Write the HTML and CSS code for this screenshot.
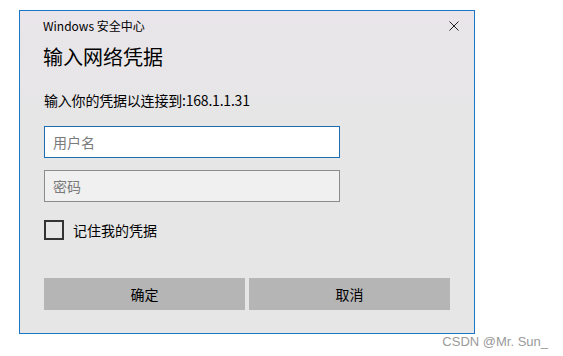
FILE: index.html
```html
<!DOCTYPE html>
<html lang="zh-CN">
<head>
<meta charset="utf-8">
<title>Windows 安全中心</title>
<link rel="stylesheet" href="styles.css">
</head>
<body>
<div class="dialog">
  <div class="header">
    <span class="app-title">Windows 安全中心</span>
    <svg class="close" width="10" height="10" viewBox="0 0 10 10" aria-hidden="true">
      <path d="M0.5 0.5 L9.5 9.5 M9.5 0.5 L0.5 9.5" stroke="#222" stroke-width="1" fill="none"/>
    </svg>
  </div>
  <h1 class="heading">输入网络凭据</h1>
  <p class="desc">输入你的凭据以连接到:168.1.1.31</p>
  <input class="field field-user" type="text" placeholder="用户名">
  <input class="field field-pass" type="password" placeholder="密码">
  <label class="remember"><span class="box"></span><span class="remember-text">记住我的凭据</span></label>
  <div class="buttons">
    <div class="btn">确定</div>
    <div class="btn">取消</div>
  </div>
</div>
<div class="watermark">CSDN @Mr. Sun_</div>
</body>
</html>
```

FILE: styles.css
```css
html, body {
  margin: 0;
  padding: 0;
  background: #ffffff;
}
body {
  width: 563px;
  height: 356px;
  overflow: hidden;
  font-family: "Noto Sans CJK SC", "Noto Sans", sans-serif;
  color: #000;
}
.dialog {
  box-sizing: border-box;
  margin: 10px 0 0 19px;
  width: 456px;
  height: 324px;
  border: 1px solid #1a76c9;
  background: linear-gradient(#e9e5ea, #e6e6e6 120px);
  padding: 0 24px 0 24px;
  display: flex;
  flex-direction: column;
}
.header {
  display: flex;
  justify-content: space-between;
  align-items: center;
  margin-top: 7px;
  margin-right: -9px;
  height: 16px;
}
.app-title {
  font-size: 12px;
  line-height: 16px;
  margin-left: -1px;
}
.close {
  display: block;
}
.heading {
  margin: 9px 0 0 -1px;
  font-size: 20px;
  line-height: 28px;
  font-weight: normal;
}
.desc {
  margin: 19px 0 0 0;
  font-size: 14px;
  line-height: 20px;
  letter-spacing: -0.2px;
}
.field {
  box-sizing: border-box;
  display: block;
  width: 296px;
  height: 32px;
  margin: 0;
  padding: 0 8px;
  font-family: "Noto Sans CJK SC", "Noto Sans", sans-serif;
  font-size: 14px;
  outline: none;
}
.field::placeholder {
  color: #7a7a7a;
}
.field-user {
  margin-top: 16px;
  background: #ffffff;
  border: 1px solid #1f6bb0;
}
.field-pass {
  margin-top: 12px;
  background: #f0f0f0;
  border: 1px solid #8c8c8c;
}
.remember {
  display: flex;
  align-items: center;
  margin-top: 18px;
  height: 20px;
}
.box {
  box-sizing: border-box;
  width: 20px;
  height: 20px;
  border: 2px solid #333;
}
.remember-text {
  margin-left: 9px;
  font-size: 14px;
  line-height: 20px;
}
.buttons {
  display: flex;
  gap: 4px;
  margin-top: 38px;
}
.btn {
  flex: 1;
  height: 32px;
  background: #b5b5b5;
  font-size: 14px;
  line-height: 32px;
  text-align: center;
}
.watermark {
  text-align: right;
  padding-right: 15px;
  font-family: "Liberation Sans", Arial, sans-serif;
  font-size: 13px;
  line-height: 15px;
  color: #9a9a9a;
}
```
